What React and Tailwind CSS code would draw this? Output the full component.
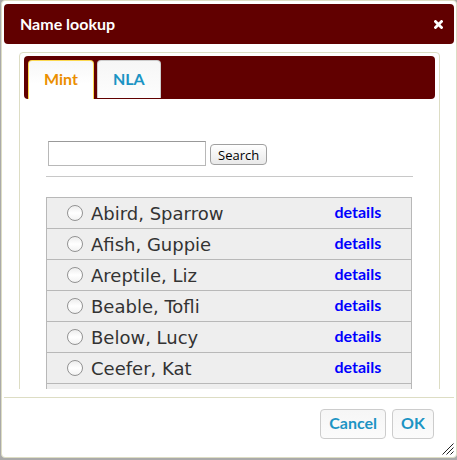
import React from "react";

const names = [
  "Abird, Sparrow",
  "Afish, Guppie",
  "Areptile, Liz",
  "Beable, Tofli",
  "Below, Lucy",
  "Ceefer, Kat",
];

const dialogButton =
  "h-[30px] rounded-[4px] border border-[#cccccc] bg-linear-to-b from-[#f6f6f6] to-[#fbfbfb] px-2 pb-[3px] text-[#1c94c4]";

function TitleBar() {
  return (
    <header className="flex h-10 shrink-0 items-center justify-between rounded-[4px] bg-[#610000] pr-[11px] pl-4 text-white">
      <h1>Name lookup</h1>
      <button type="button" aria-label="Close">
        <svg width="9" height="9" viewBox="0 0 9 9" className="block">
          <path d="M1.5 1.5L7.5 7.5M7.5 1.5L1.5 7.5" stroke="#fff" strokeWidth="2.8" strokeLinecap="square" />
        </svg>
      </button>
    </header>
  );
}

function Tabs() {
  return (
    <nav role="tablist" className="flex h-[43px] items-start gap-[3px] rounded-[4px] bg-[#610000] px-1 pt-1">
      <button
        type="button"
        role="tab"
        aria-selected="true"
        className="h-[39px] rounded-t-[4px] border border-b-0 border-[#fbd850] bg-linear-to-b from-[#f7f7f7] to-white to-60% px-[15px] pb-[2px] text-[#eb8f00]"
      >
        Mint
      </button>
      <button
        type="button"
        role="tab"
        aria-selected="false"
        className="h-[38px] rounded-t-[4px] border border-b-0 border-[#cccccc] bg-linear-to-b from-[#f6f6f6] to-[#fdfdfd] px-[15px] pb-[1px] text-[#1c94c4]"
      >
        NLA
      </button>
    </nav>
  );
}

function SearchForm() {
  return (
    <form className="flex items-center gap-1 border-b border-[#c8c8c8] pb-[10px] pl-[2px]" onSubmit={(e) => e.preventDefault()}>
      <input
        type="text"
        aria-label="Name"
        className="h-[25px] w-[158px] border border-[#b8b8b8] border-t-[#999999] bg-white px-1 text-sm font-normal outline-none"
      />
      <button
        type="submit"
        className="mt-[2px] h-[21px] rounded-[4px] border border-[#a0a0a0] bg-linear-to-b from-white via-[#f4f4f4] to-[#e9e9e9] px-[7px] font-['Open_Sans',sans-serif] text-[13px] leading-[18px] font-normal text-black"
      >
        Search
      </button>
    </form>
  );
}

function Results() {
  return (
    <div className="pt-5 pr-px">
      <table className="w-full border-collapse border border-[#b8b8b8] bg-[#eeeeee]">
        <tbody>
          {names.map((name, i) => (
            <tr key={name} className="h-[31px] border-b border-[#b8b8b8]">
              <td className="p-0 pl-5">
                <div className="flex items-center gap-2">
                  <input
                    id={`name-${i}`}
                    type="radio"
                    name="person"
                    className="size-4 appearance-none rounded-full border border-[#929292] bg-linear-to-b from-[#f0f0f0] from-10% via-white via-50% to-[#f2f2f2]"
                  />
                  <label
                    htmlFor={`name-${i}`}
                    className="pt-[2px] font-['DejaVu_Sans',sans-serif] text-[18px] leading-6 font-normal text-[#333333]"
                  >
                    {name}
                  </label>
                </div>
              </td>
              <td className="w-[77px] p-0 pb-[2px]">
                <a href="#details" className="text-[#0000ff]">
                  details
                </a>
              </td>
            </tr>
          ))}
          <tr className="h-[31px]">
            <td colSpan={2} />
          </tr>
        </tbody>
      </table>
    </div>
  );
}

export default function App() {
  return (
    <div className="flex h-screen flex-col bg-[#aaaaaa] pb-[2px] pl-px font-[Lato,sans-serif] text-[16px] leading-5 font-bold">
      <main className="flex min-h-0 flex-1 flex-col rounded-[4px] border border-[#ddddc4] bg-white px-[2px] pt-[3px]">
        <TitleBar />
        <div className="min-h-0 flex-1 overflow-hidden pt-2 pr-[14px] pl-[15px]">
          <section className="rounded-[4px] border border-[#ddddc4] px-1 pt-[3px] pb-5">
            <Tabs />
            <div className="pt-[42px] pr-[22px] pl-[22px]">
              <SearchForm />
              <Results />
            </div>
          </section>
        </div>
        <footer className="relative mt-2 flex h-[60px] shrink-0 justify-end gap-[6px] border-t border-[#ddddc4] pt-[11px] pr-5">
          <button type="button" className={dialogButton}>
            Cancel
          </button>
          <button type="button" className={dialogButton}>
            OK
          </button>
          <svg width="12" height="12" viewBox="0 0 12 12" className="absolute right-0 bottom-[2px]" aria-hidden="true">
            <path d="M0.5 11.5L11.5 0.5M4.5 11.5L11.5 4.5M8.5 11.5L11.5 8.5" stroke="#222" strokeWidth="1" fill="none" />
          </svg>
        </footer>
      </main>
    </div>
  );
}
